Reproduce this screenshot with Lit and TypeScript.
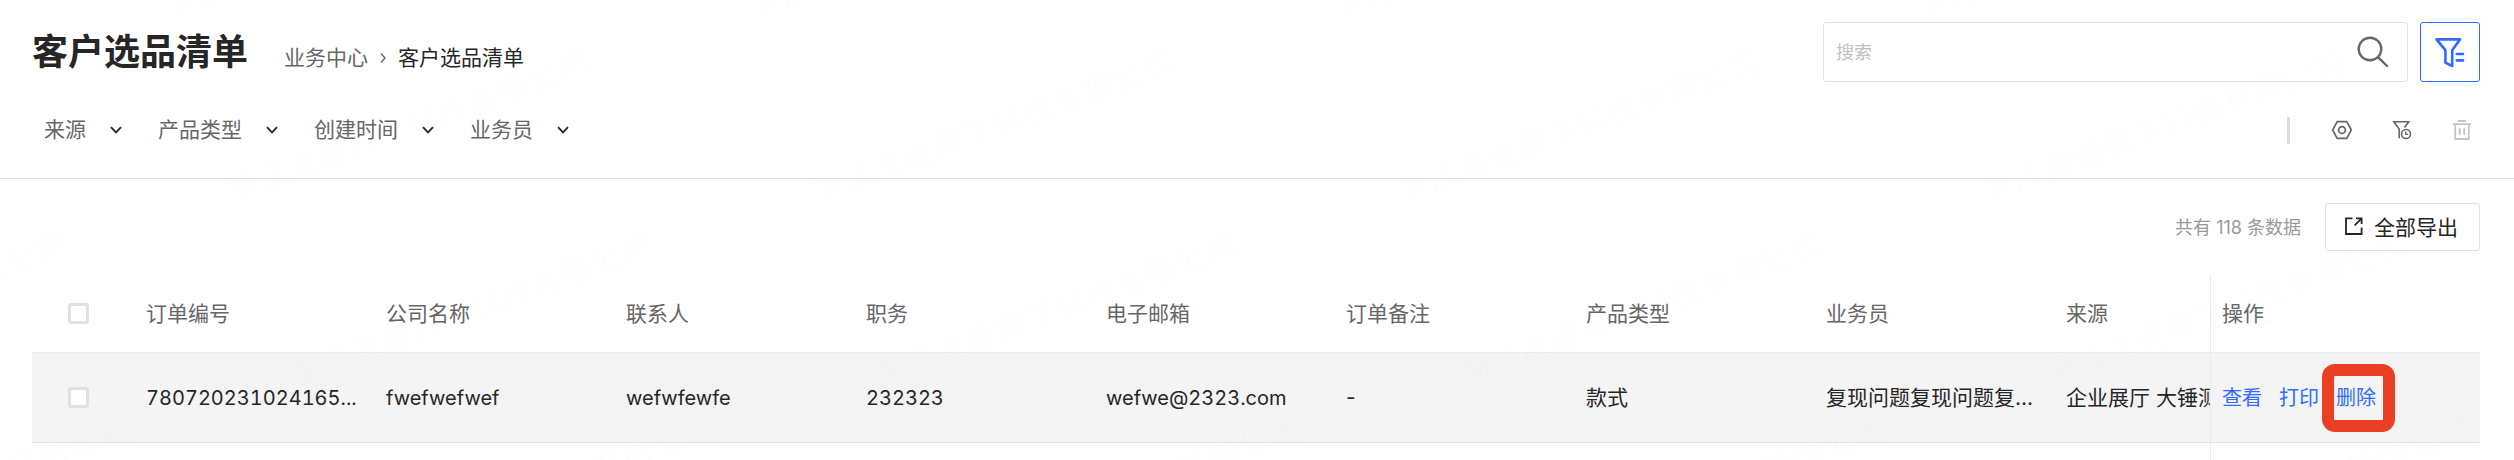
import { LitElement, html, css, svg } from "lit";
import { customElement } from "lit/decorators.js";
import { classMap } from "lit/directives/class-map.js";

interface Column {
  key: string;
  label: string;
  latin?: boolean;
}

const FILTERS = ["来源", "产品类型", "创建时间", "业务员"];

const COLUMNS: Column[] = [
  { key: "orderNo", label: "订单编号", latin: true },
  { key: "company", label: "公司名称", latin: true },
  { key: "contact", label: "联系人", latin: true },
  { key: "job", label: "职务", latin: true },
  { key: "email", label: "电子邮箱", latin: true },
  { key: "remark", label: "订单备注" },
  { key: "productType", label: "产品类型" },
  { key: "salesman", label: "业务员" },
  { key: "source", label: "来源" },
];

const ROWS: Record<string, string>[] = [
  {
    orderNo: "780720231024165...",
    company: "fwefwefwef",
    contact: "wefwfewfe",
    job: "232323",
    email: "wefwe@2323.com",
    remark: "-",
    productType: "款式",
    salesman: "复现问题复现问题复...",
    source: "企业展厅 大锤测",
  },
];

const WATERMARK = "浙江凌迪数字科技有限公司";

const chevronDown = html`<svg class="chevron" viewBox="0 0 12 8" width="12" height="8" aria-hidden="true">
  <path d="M1 1.2 6 6.4 11 1.2" fill="none" stroke="#262626" stroke-width="1.8" />
</svg>`;

@customElement("page-header")
export class PageHeader extends LitElement {
  static styles = css`
    :host {
      display: block;
      padding: 22px 34px 0 32px;
      border-bottom: 1px solid #e0e0e0;
    }
    .top {
      display: flex;
      align-items: center;
      justify-content: space-between;
      height: 60px;
    }
    .heading {
      display: flex;
      align-items: baseline;
      gap: 36px;
    }
    .title {
      margin: 0;
      font-size: 36px;
      line-height: 60px;
      font-weight: 700;
      color: #262626;
    }
    .crumbs {
      display: flex;
      align-items: center;
      gap: 11px;
      font-size: 21px;
      line-height: 32px;
      color: #262626;
    }
    .crumbs a {
      color: #666;
      text-decoration: none;
    }
    .search-area {
      display: flex;
      gap: 12px;
    }
    .search {
      display: flex;
      align-items: center;
      box-sizing: border-box;
      width: 585px;
      height: 60px;
      padding: 0 18px 0 12px;
      border: 1px solid #e0e0e0;
      border-radius: 3px;
    }
    .search input {
      flex: 1;
      min-width: 0;
      padding: 0;
      border: 0;
      outline: 0;
      background: none;
      font: inherit;
      font-size: 18px;
      color: #262626;
    }
    .search input::placeholder {
      color: #bfbfbf;
      opacity: 1;
    }
    button {
      display: flex;
      align-items: center;
      justify-content: center;
      padding: 0;
      border: 0;
      background: none;
      font: inherit;
    }
    .filter-toggle {
      box-sizing: border-box;
      width: 60px;
      height: 60px;
      border: 1px solid #2f6bff;
      border-radius: 3px;
    }
    .bar {
      display: flex;
      align-items: center;
      justify-content: space-between;
      height: 96px;
    }
    .filters {
      display: flex;
      gap: 36px;
      padding-left: 12px;
    }
    .filter {
      display: flex;
      align-items: center;
      gap: 24px;
    }
    .filter select {
      appearance: none;
      padding: 0;
      border: 0;
      outline: 0;
      background: none;
      font: inherit;
      font-size: 21px;
      line-height: 32px;
      color: #666;
    }
    .tools {
      display: flex;
      align-items: center;
      gap: 36px;
      padding-right: 6px;
    }
    .rule {
      width: 3px;
      height: 27px;
      margin-right: 4px;
      background: #dedede;
    }
    svg {
      display: block;
    }
  `;

  render() {
    return html`
      <div class="top">
        <div class="heading">
          <h1 class="title">客户选品清单</h1>
          <nav class="crumbs" aria-label="breadcrumb">
            <a href="#">业务中心</a>
            <svg viewBox="0 0 8 12" width="8" height="12" aria-hidden="true">
              <path d="M2 1.5 6 6 2 10.5" fill="none" stroke="#666" stroke-width="1.4" />
            </svg>
            <span>客户选品清单</span>
          </nav>
        </div>
        <div class="search-area">
          <label class="search">
            <input type="text" placeholder="搜索" aria-label="搜索" />
            <svg viewBox="0 0 32 32" width="32" height="32" aria-hidden="true">
              <g fill="none" stroke="#666" stroke-width="2.4" stroke-linecap="round">
                <circle cx="13" cy="13" r="11.3" />
                <path d="M21 21.2 30 30" />
              </g>
            </svg>
          </label>
          <button class="filter-toggle" type="button" aria-label="筛选">
            <svg viewBox="0 0 32 32" width="32" height="32" aria-hidden="true">
              <g fill="none" stroke="#2f6bff" stroke-width="2.6" stroke-linejoin="round" stroke-linecap="round">
                <path d="M2.5 3.4H26L18.2 14.2V30L11.4 26.6V14.2Z" />
                <path d="M22.8 18H29M22.8 24.4H29" />
              </g>
            </svg>
          </button>
        </div>
      </div>
      <div class="bar">
        <div class="filters">
          ${FILTERS.map(
            (name) => html`<label class="filter">
              <select aria-label=${name}>
                <option>${name}</option>
              </select>
              ${chevronDown}
            </label>`
          )}
        </div>
        <div class="tools">
          <span class="rule"></span>
          <button type="button" aria-label="设置">
            <svg viewBox="0 0 24 24" width="24" height="24" aria-hidden="true">
              <g fill="none" stroke="#666" stroke-width="1.7">
                <path d="M7.2 3.6H16.8L21.3 12L16.8 20.4H7.2L2.7 12Z" />
                <circle cx="12" cy="12" r="3.4" />
              </g>
            </svg>
          </button>
          <button type="button" aria-label="筛选记录">
            <svg viewBox="0 0 24 24" width="24" height="24" aria-hidden="true">
              <g fill="none" stroke="#666" stroke-width="1.6">
                <path d="M9.2 20.2V11L3.8 3.8H18.8L14.4 9.6" />
                <circle cx="16" cy="16" r="4.5" />
                <path d="M15.7 13.4V16.4H18.2" stroke-width="1.3" />
              </g>
            </svg>
          </button>
          <button type="button" aria-label="删除">
            <svg viewBox="0 0 24 24" width="24" height="24" aria-hidden="true">
              <g fill="none" stroke="#c4c4c4" stroke-width="1.8">
                <path d="M8 3H16M3 6.2H21M5.2 6.2V21H18.8V6.2M9.8 10.2V17M14.2 10.2V17" />
              </g>
            </svg>
          </button>
        </div>
      </div>
    `;
  }
}

@customElement("order-table")
export class OrderTable extends LitElement {
  static styles = css`
    :host {
      display: block;
      padding: 24px 34px 0 32px;
    }
    .summary {
      display: flex;
      align-items: center;
      justify-content: flex-end;
      gap: 24px;
      margin-bottom: 24px;
    }
    .count {
      padding-bottom: 2px;
      font-size: 18px;
      color: #999;
    }
    .export {
      display: flex;
      align-items: center;
      gap: 8px;
      box-sizing: border-box;
      height: 48px;
      padding: 0 21px 2px 16px;
      border: 1px solid #e0e0e0;
      border-radius: 3px;
      background: #fff;
      font: inherit;
      font-size: 21px;
      color: #262626;
    }
    .scroller {
      overflow: hidden;
    }
    table {
      width: 100%;
      min-width: 2532px;
      table-layout: fixed;
      border-collapse: separate;
      border-spacing: 0;
      font-size: 21px;
      line-height: 32px;
    }
    .col-check {
      width: 102px;
    }
    .col-actions {
      width: 270px;
    }
    th,
    td {
      box-sizing: border-box;
      padding: 0 8px 0 12px;
      text-align: left;
      font-weight: 400;
      white-space: nowrap;
      overflow: hidden;
      text-overflow: ellipsis;
    }
    th {
      height: 78px;
      color: #666;
      border-bottom: 1px solid #ececec;
    }
    td {
      height: 90px;
      color: #262626;
      background: #f4f4f4;
      border-bottom: 1px solid #e4e4e4;
    }
    .latin {
      font-size: 20px;
      font-variant-numeric: tabular-nums;
    }
    .check {
      padding-left: 36px;
    }
    .check input {
      appearance: none;
      display: block;
      box-sizing: border-box;
      width: 21px;
      height: 21px;
      margin: 0;
      border: 3px solid #dfdfe6;
      border-radius: 3px;
      background: #fff;
    }
    .actions {
      position: sticky;
      right: 0;
      overflow: visible;
      border-left: 1px solid #ebebeb;
      padding-left: 11px;
    }
    th.actions,
    .blank td {
      background: #fff;
    }
    .blank td {
      height: 60px;
      border-bottom: 0;
    }
    .links {
      display: flex;
      gap: 17px;
      font-size: 20px;
    }
    .links a {
      color: #2f6bff;
      text-decoration: none;
    }
    .marked {
      position: relative;
    }
    .marked::after {
      content: "";
      position: absolute;
      inset: -18px -19px -18px -14px;
      border: 12px solid #eb3f25;
      border-radius: 13px;
      pointer-events: none;
    }
  `;

  render() {
    return html`
      <div class="summary">
        <span class="count">共有 118 条数据</span>
        <button class="export" type="button">
          <svg viewBox="0 0 24 24" width="24" height="24" aria-hidden="true">
            <g fill="none" stroke="#262626" stroke-width="1.8">
              <path d="M10.5 4.4H4V20H19.6V13.5" />
              <path d="M14 4.4H19.6V10M19.4 4.6 12.6 11.4" />
            </g>
          </svg>
          全部导出
        </button>
      </div>
      <div class="scroller">
        <table>
          <colgroup>
            <col class="col-check" />
            ${COLUMNS.map(() => html`<col />`)}
            <col class="col-actions" />
          </colgroup>
          <thead>
            <tr>
              <th class="check"><input type="checkbox" aria-label="全选" /></th>
              ${COLUMNS.map((c) => html`<th scope="col">${c.label}</th>`)}
              <th class="actions" scope="col">操作</th>
            </tr>
          </thead>
          <tbody>
            ${ROWS.map(
              (row) => html`<tr>
                <td class="check"><input type="checkbox" aria-label="选择" /></td>
                ${COLUMNS.map((c) => html`<td class=${classMap({ latin: !!c.latin })}>${row[c.key]}</td>`)}
                <td class="actions">
                  <div class="links">
                    <a href="#">查看</a>
                    <a href="#">打印</a>
                    <a class="marked" href="#">删除</a>
                  </div>
                </td>
              </tr>`
            )}
            <tr class="blank">
              <td colspan="10"></td>
              <td class="actions"></td>
            </tr>
          </tbody>
        </table>
      </div>
    `;
  }
}

@customElement("app-root")
export class AppRoot extends LitElement {
  static styles = css`
    :host {
      display: block;
      position: relative;
      min-height: 100vh;
      max-height: 100vh;
      overflow: hidden;
      background: #fff;
      font-family: Inter, "Noto Sans CJK SC", sans-serif;
    }
    .watermark {
      position: absolute;
      inset: 0;
      width: 100%;
      height: 100%;
      pointer-events: none;
    }
    .watermark text {
      font-size: 32px;
      fill: #000;
      fill-opacity: 0.006;
    }
  `;

  /* Tiles the company name over the page on a slanted grid. */
  private renderWatermark() {
    const marks = [];
    for (let row = 0; row < 4; row++) {
      for (let col = row < 2 ? 0 : -1; col < 4; col++) {
        const x = 168 + row * 63 + col * 585;
        const y = 20 + row * 183;
        marks.push(svg`<g transform="translate(${x} ${y}) rotate(-20)"><text>${WATERMARK}</text></g>`);
      }
    }
    return html`<svg class="watermark" aria-hidden="true">${marks}</svg>`;
  }

  render() {
    return html`
      <page-header></page-header>
      <order-table></order-table>
      ${this.renderWatermark()}
    `;
  }
}
